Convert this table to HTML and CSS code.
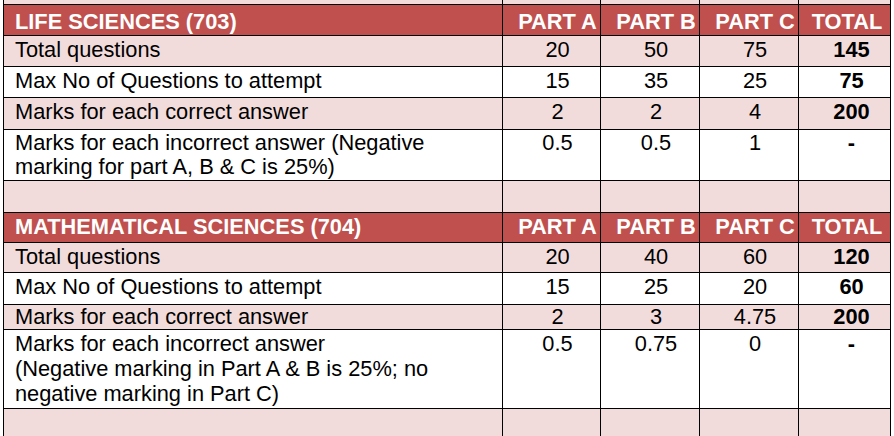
FILE: index.html
```html
<!DOCTYPE html>
<html lang="en">
<head>
<meta charset="utf-8">
<title>Exam pattern</title>
<link rel="stylesheet" href="styles.css">
</head>
<body>
<div class="sheet">
  <div class="cell pink strip first"></div><div class="cell pink strip"></div><div class="cell pink strip"></div><div class="cell pink strip"></div><div class="cell pink strip"></div>

  <div class="cell head h1 first">LIFE SCIENCES (703)</div><div class="cell head h1 num">PART A</div><div class="cell head h1 num">PART B</div><div class="cell head h1 num">PART C</div><div class="cell head h1 tot">TOTAL</div>

  <div class="cell pink r31 first">Total questions</div><div class="cell pink r31 num">20</div><div class="cell pink r31 num">50</div><div class="cell pink r31 num">75</div><div class="cell pink r31 tot b">145</div>

  <div class="cell r31 first">Max No of Questions to attempt</div><div class="cell r31 num">15</div><div class="cell r31 num">35</div><div class="cell r31 num">25</div><div class="cell r31 tot b">75</div>

  <div class="cell pink r32 first">Marks for each correct answer</div><div class="cell pink r32 num">2</div><div class="cell pink r32 num">2</div><div class="cell pink r32 num">4</div><div class="cell pink r32 tot b">200</div>

  <div class="cell r51 first">Marks for each incorrect answer (Negative marking for part A, B &amp; C is 25%)</div><div class="cell r51 num">0.5</div><div class="cell r51 num">0.5</div><div class="cell r51 num">1</div><div class="cell r51 tot b">-</div>

  <div class="cell pink r32 first"></div><div class="cell pink r32"></div><div class="cell pink r32"></div><div class="cell pink r32"></div><div class="cell pink r32"></div>

  <div class="cell head h2 first">MATHEMATICAL SCIENCES (704)</div><div class="cell head h2 num">PART A</div><div class="cell head h2 num">PART B</div><div class="cell head h2 num">PART C</div><div class="cell head h2 tot">TOTAL</div>

  <div class="cell pink r30 first">Total questions</div><div class="cell pink r30 num">20</div><div class="cell pink r30 num">40</div><div class="cell pink r30 num">60</div><div class="cell pink r30 tot b">120</div>

  <div class="cell r32 first">Max No of Questions to attempt</div><div class="cell r32 num">15</div><div class="cell r32 num">25</div><div class="cell r32 num">20</div><div class="cell r32 tot b">60</div>

  <div class="cell pink r25 first">Marks for each correct answer</div><div class="cell pink r25 num">2</div><div class="cell pink r25 num">3</div><div class="cell pink r25 num">4.75</div><div class="cell pink r25 tot b">200</div>

  <div class="cell r79 first">Marks for each incorrect answer<br>(Negative marking in Part A &amp; B is 25%; no negative marking in Part C)</div><div class="cell r79 num">0.5</div><div class="cell r79 num">0.75</div><div class="cell r79 num">0</div><div class="cell r79 tot b">-</div>

  <div class="cell pink r32 first"></div><div class="cell pink r32"></div><div class="cell pink r32"></div><div class="cell pink r32"></div><div class="cell pink r32"></div>
</div>
</body>
</html>
```

FILE: styles.css
```css
html, body {
  margin: 0;
  padding: 0;
  background: #ffffff;
}

body {
  font-family: "Liberation Sans", Arial, sans-serif;
  color: #000000;
  overflow: hidden;
}

.sheet {
  display: grid;
  grid-template-columns: 499px 98px 99px 99px 92px;
  width: max-content;
  margin-left: 3px;
  border-left: 1px solid #000;
}

.cell {
  box-sizing: border-box;
  border-right: 1px solid #000;
  border-bottom: 1px solid #000;
  font-size: 21.8px;
  line-height: 24px;
  background: #ffffff;
  padding-top: 2px;
}

.pink { background: #f2dcdb; }

.head {
  background: #c0504d;
  color: #ffffff;
  font-weight: bold;
  padding-top: 5px;
}

.first { padding-left: 11px; padding-right: 40px; }
.num { text-align: center; padding-left: 12px; }
.tot { text-align: center; padding-left: 14px; }
.head.tot { padding-left: 5px; }
.b { font-weight: bold; }

.strip { height: 5px; padding: 0; }
.h1 { height: 31px; }
.h2 { height: 30px; padding-top: 2px; }
.r31 { height: 31px; }
.r30 { height: 30px; }
.r32 { height: 32px; }
.r25 { height: 25px; padding-top: 0; }
.r51 { height: 51px; padding-top: 1px; }
.r79 { height: 79px; padding-top: 1px; line-height: 25px; }
```
